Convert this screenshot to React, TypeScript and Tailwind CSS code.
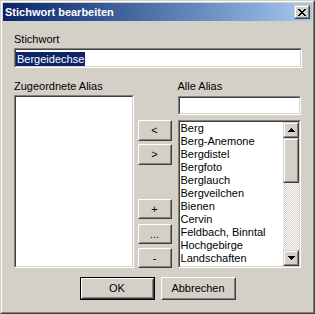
import React from "react";

const items = [
  "Berg",
  "Berg-Anemone",
  "Bergdistel",
  "Bergfoto",
  "Berglauch",
  "Bergveilchen",
  "Bienen",
  "Cervin",
  "Feldbach, Binntal",
  "Hochgebirge",
  "Landschaften",
  "Lötschental",
];

// classic raised 3d button edge
const Raised = ({ className = "", children }: { className?: string; children?: React.ReactNode }) => (
  <div className={`border border-t-white border-l-white border-b-[#404040] border-r-[#404040] bg-[#d4d0c8] ${className}`}>
    <div className="w-full h-full border border-t-[#d4d0c8] border-l-[#d4d0c8] border-b-[#808080] border-r-[#808080] flex items-center justify-center">
      {children}
    </div>
  </div>
);

const ScrollBtn = ({ className = "", children }: { className?: string; children?: React.ReactNode }) => (
  <div className={`border border-t-[#d4d0c8] border-l-[#d4d0c8] border-b-[#404040] border-r-[#404040] bg-[#d4d0c8] ${className}`}>
    <div className="w-full h-full border border-t-white border-l-white border-b-[#808080] border-r-[#808080] flex items-center justify-center">
      {children}
    </div>
  </div>
);

const Sunken = ({ className = "", children }: { className?: string; children?: React.ReactNode }) => (
  <div className={`border border-t-[#808080] border-l-[#808080] border-b-white border-r-white ${className}`}>
    <div className="w-full h-full border border-t-[#404040] border-l-[#404040] border-b-[#d4d0c8] border-r-[#d4d0c8] bg-white overflow-hidden">
      {children}
    </div>
  </div>
);

const Btn = ({ label, className = "" }: { label: string; className?: string }) => (
  <Raised className={`w-[34px] ${className}`}>
    <span className="leading-[13px]">{label}</span>
  </Raised>
);

const CloseGlyph = () => (
  <svg width="8" height="7" viewBox="0 0 8 7" shapeRendering="crispEdges">
    <rect x="0" y="0" width="2" height="1" fill="#000" />
    <rect x="6" y="0" width="2" height="1" fill="#000" />
    <rect x="1" y="1" width="2" height="1" fill="#000" />
    <rect x="5" y="1" width="2" height="1" fill="#000" />
    <rect x="2" y="2" width="4" height="1" fill="#000" />
    <rect x="3" y="3" width="2" height="1" fill="#000" />
    <rect x="2" y="4" width="4" height="1" fill="#000" />
    <rect x="1" y="5" width="2" height="1" fill="#000" />
    <rect x="5" y="5" width="2" height="1" fill="#000" />
    <rect x="0" y="6" width="2" height="1" fill="#000" />
    <rect x="6" y="6" width="2" height="1" fill="#000" />
  </svg>
);

const Arrow = ({ down = false }: { down?: boolean }) => (
  <svg width="7" height="4" viewBox="0 0 7 4" shapeRendering="crispEdges" className={down ? "rotate-180" : ""}>
    <rect x="3" y="0" width="1" height="1" fill="#000" />
    <rect x="2" y="1" width="3" height="1" fill="#000" />
    <rect x="1" y="2" width="5" height="1" fill="#000" />
    <rect x="0" y="3" width="7" height="1" fill="#000" />
  </svg>
);

export default function App() {
  return (
    <div className="w-[315px] h-[314px] bg-[#d4d0c8] border border-t-[#d4d0c8] border-l-[#d4d0c8] border-b-[#404040] border-r-[#404040] font-['Liberation_Sans',Arial,sans-serif] text-[11px] text-black select-none">
      <div className="w-full h-full border border-t-white border-l-white border-b-[#808080] border-r-[#808080] p-[1px] flex flex-col">
        {/* title bar */}
        <div className="h-[18px] bg-linear-to-r from-[#0a246a] to-[#a6caf0] flex items-center justify-between pl-[2px] pr-[2px]">
          <span className="text-white font-bold leading-[13px] pt-[1px]">Stichwort bearbeiten</span>
          <ScrollBtn className="w-[16px] h-[14px]">
            <CloseGlyph />
          </ScrollBtn>
        </div>

        <div className="px-[11px] flex flex-col">
          <div className="mt-[12px] leading-[13px]">Stichwort</div>
          <Sunken className="mt-[2px] h-[20px] w-[288px]">
            <div className="pt-[1px]">
              <span className="bg-[#0a246a] text-white leading-[14px] inline-block pl-[1px] pr-[1px]">Bergeidechse</span>
            </div>
          </Sunken>

          <div className="mt-[12px] flex">
            {/* left column */}
            <div className="w-[120px] flex flex-col">
              <div className="leading-[13px]">Zugeordnete Alias</div>
              <Sunken className="mt-[2px] h-[173px]" />
            </div>

            {/* middle buttons */}
            <div className="ml-[4px] pt-[40px] flex flex-col">
              <Btn label="<" className="h-[21px]" />
              <Btn label=">" className="h-[21px] mt-[3px]" />
              <Btn label="+" className="h-[20px] mt-[34px]" />
              <Btn label="..." className="h-[20px] mt-[5px]" />
              <Btn label="-" className="h-[20px] mt-[4px]" />
            </div>

            {/* right column */}
            <div className="ml-[6px] w-[124px] flex flex-col">
              <div className="leading-[13px]">Alle Alias</div>
              <Sunken className="mt-[3px] h-[19px]" />
              <Sunken className="mt-[5px] h-[148px]">
                <div className="flex h-full">
                  <div className="flex-1 pl-[1px] overflow-hidden">
                    {items.map((it) => (
                      <div key={it} className="leading-[13px] whitespace-nowrap">
                        {it}
                      </div>
                    ))}
                  </div>
                  <div className="w-[16px] flex flex-col">
                    <ScrollBtn className="h-[16px]">
                      <Arrow />
                    </ScrollBtn>
                    <ScrollBtn className="h-[45px]" />
                    <div className="flex-1 bg-[repeating-conic-gradient(#d4d0c8_0_25%,#ffffff_0_50%)] bg-size-[2px_2px]" />
                    <ScrollBtn className="h-[16px]">
                      <Arrow down />
                    </ScrollBtn>
                  </div>
                </div>
              </Sunken>
            </div>
          </div>

          {/* dialog buttons */}
          <div className="mt-[9px] flex justify-center gap-[6px]">
            <div className="w-[75px] h-[23px] border border-black">
              <Raised className="w-full h-full">
                <span className="leading-[13px]">OK</span>
              </Raised>
            </div>
            <Raised className="w-[75px] h-[23px]">
              <span className="leading-[13px]">Abbrechen</span>
            </Raised>
          </div>
        </div>
      </div>
    </div>
  );
}
